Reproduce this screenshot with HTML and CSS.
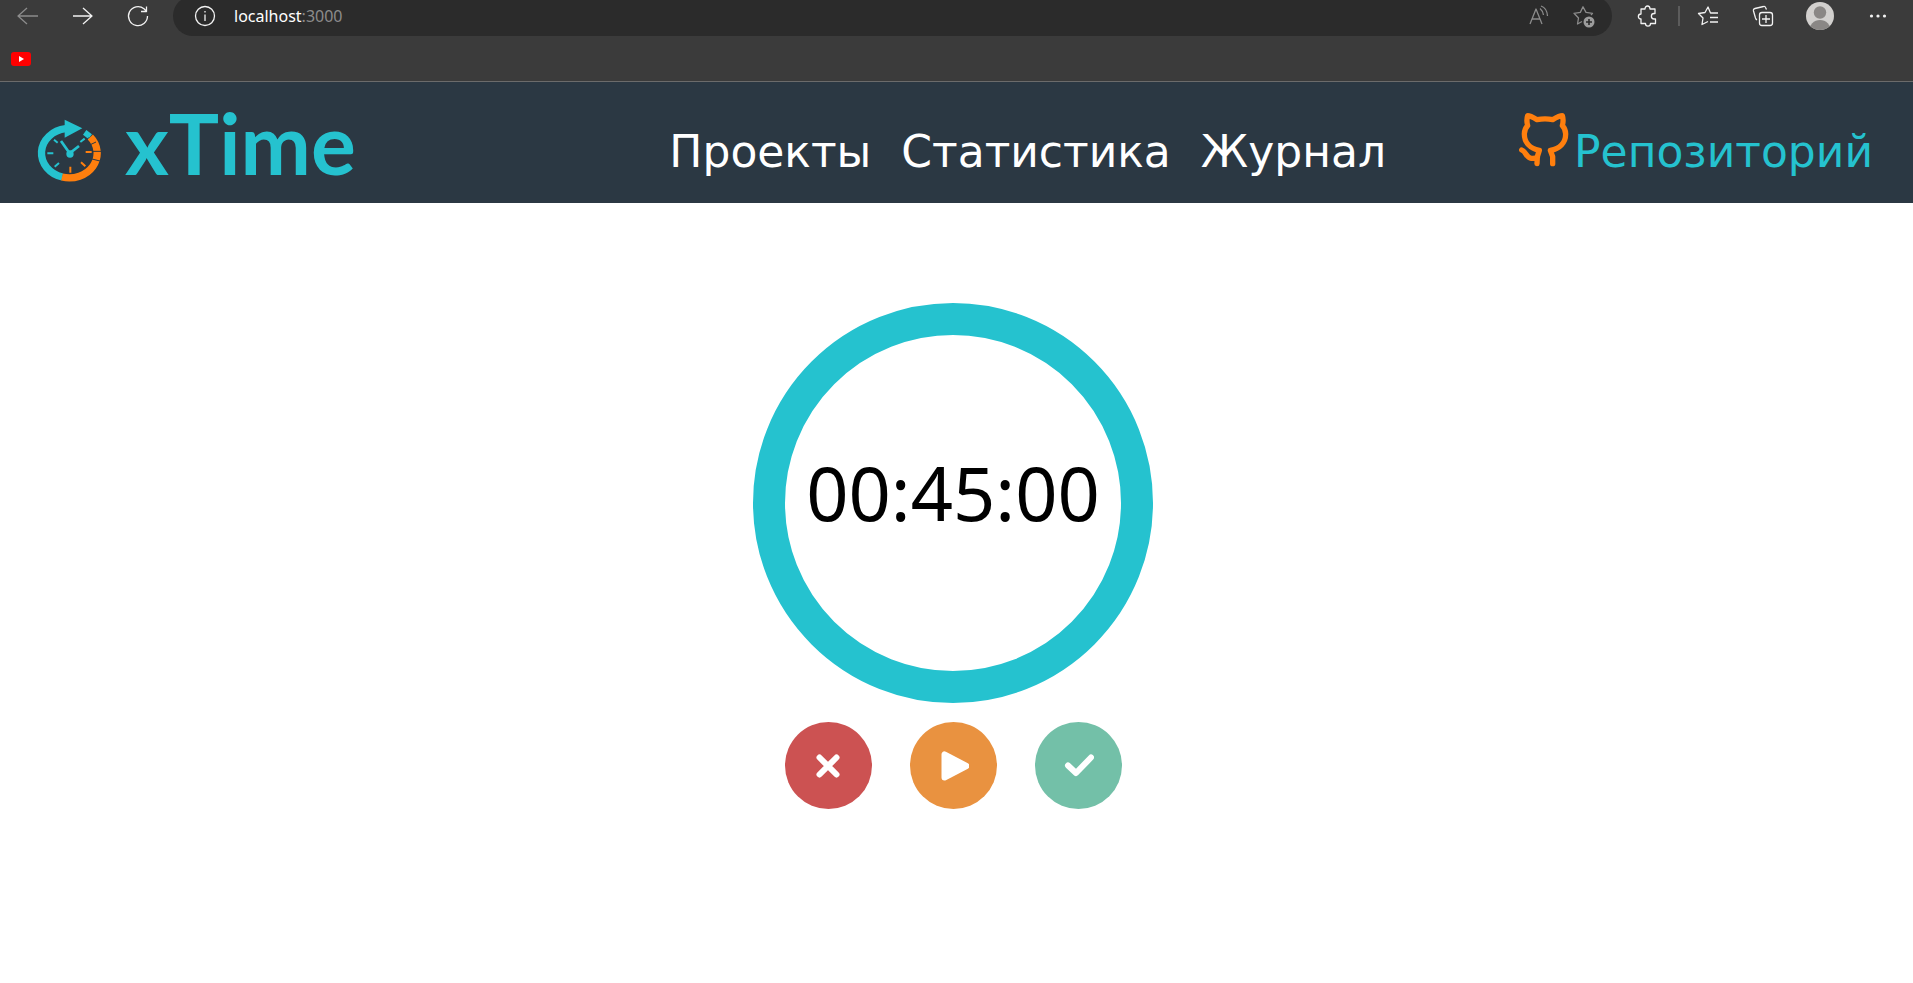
FILE: index.html
```html
<!DOCTYPE html>
<html lang="ru">
<head>
<meta charset="utf-8">
<title>xTime</title>
<link rel="stylesheet" href="styles.css">
</head>
<body>
<div class="browser">
  <div class="toolbar">
    <button class="tool tool-dim" aria-label="Back"><svg width="24" height="24" viewBox="0 0 24 24"><path d="M22 12H2M11 4L2 12L11 20"/></svg></button>
    <button class="tool" aria-label="Forward"><svg width="24" height="24" viewBox="0 0 24 24"><path d="M2 12H21M12 4L21 12L12 20"/></svg></button>
    <button class="tool" aria-label="Reload"><svg width="24" height="24" viewBox="0 0 24 24"><path d="M21.500 12A9.500 9.500 0 1 1 18 4.700L20.500 7.300M20.500 2.500V7.500H15"/></svg></button>
    <div class="address">
      <svg class="info" width="24" height="24" viewBox="0 0 24 24"><circle cx="12" cy="12" r="9.500"/><path d="M12 10.500V17M12 7V8.500"/></svg>
      <span class="url">localhost<span class="port">:3000</span></span>
      <button class="tool tool-small tool-dim" aria-label="Read aloud"><svg width="24" height="24" viewBox="0 0 24 24"><path d="M3 20L9 5L15 20M5 15H13M13 4.500Q16 7 16.500 11M14 2Q20 4 20.500 12"/></svg></button>
      <button class="tool tool-small tool-dim" aria-label="Add to favorites"><svg width="24" height="24" viewBox="0 0 24 24"><path d="M10 17.500L5.500 20L6.500 14L2 9.300L8.300 8.400L11 2.800L14 8.400L20.500 9.300L19 11"/><circle class="dot" cx="17" cy="18" r="5.500"/><path class="plus" d="M17 15V21M14 18H20"/></svg></button>
    </div>
    <button class="tool tool-wide" aria-label="Extensions"><svg width="24" height="24" viewBox="0 0 24 24"><path d="M5 5H9C9 1 14 1 14 5H19V9.500H18C14.500 9.500 14.500 15 18 15H19.500V19.500H14.500C14.500 23 9.500 23 9.500 19.500H5V15C1.500 15 1.500 10 5 10Z"/></svg></button>
    <span class="divider"></span>
    <button class="tool" aria-label="Favorites"><svg width="24" height="24" viewBox="0 0 24 24"><path d="M22 9H14.500L12 3L9 8.500L2.500 9.500L7 14L6 20.500L12 17.500M14 13.500H22M14 18H22"/></svg></button>
    <button class="tool" aria-label="Collections"><svg width="24" height="24" viewBox="0 0 24 24"><rect x="8.500" y="8.500" width="13" height="13" rx="2.500"/><path d="M15 11V19M11 15H19M15.500 5.500L14.500 3.500Q14 2 12.500 2.500L4 4.500Q2 5 2.500 7L4.500 14Q5 15.500 6 16"/></svg></button>
    <button class="tool tool-wide" aria-label="Profile"><svg width="28" height="28" viewBox="0 0 28 28"><defs><clipPath id="face"><circle cx="14" cy="14" r="14"/></clipPath></defs><g clip-path="url(#face)"><rect class="avatar-bg" width="28" height="28"/><circle class="avatar-fg" cx="14" cy="10.500" r="6.200"/><circle class="avatar-fg" cx="14" cy="29" r="11"/></g></svg></button>
    <button class="tool" aria-label="Menu"><svg width="24" height="24" viewBox="0 0 24 24"><g class="menu-dots"><circle cx="5.500" cy="12" r="1.600"/><circle cx="12" cy="12" r="1.600"/><circle cx="18.500" cy="12" r="1.600"/></g></svg></button>
  </div>
  <div class="bookmarks">
    <a href="#" aria-label="YouTube"><svg width="20" height="14" viewBox="0 0 20 14"><rect class="yt-box" width="20" height="14" rx="3"/><path class="yt-play" d="M8 4L13 7L8 10Z"/></svg></a>
  </div>
</div>

<header class="header">
  <a class="logo" href="#">
    <svg class="clock" width="64" height="64" viewBox="22 28 192 192">
      <g class="ring">
        <path class="teal" d="M98 202A83.500 74 0 0 1 108 57"/>
        <path class="orange" d="M97 202A83.500 74 0 0 0 182 82"/>
      </g>
      <path class="teal-fill" d="M105 30L158 56L105 84ZM170 61L187 74L176 88L160 75Z"/>
      <path class="gaps" d="M178 83L169 92M199 97L182 105M214 125L189 125M211 154L187 148"/>
      <path class="ticks teal" d="M73 90L84 99M53 131H71M75 171L88 160M152 97L165 87"/>
      <path class="ticks orange" d="M168 127H186M154 158L167 170M122 171V189"/>
      <path class="hands teal" d="M94 94L120 131L148 109"/>
      <circle class="teal-fill" cx="121" cy="133" r="11"/>
    </svg>
    <span class="brand">xTime</span>
  </a>
  <nav class="nav">
    <a href="#">Проекты</a>
    <a href="#">Статистика</a>
    <a href="#">Журнал</a>
  </nav>
  <a class="repo" href="#">
    <svg class="cat" width="52" height="56" viewBox="48 38 156 168">
      <path d="M105 193L106 172L112 153C85 148 67 130 67 104C67 95 70 86 77 79C74 68 74 58 77 49C85 49 95 55 105 61C120 58 138 58 152 61C162 55 172 49 181 49C184 58 184 68 181 79C188 86 191 95 191 104C191 130 173 148 145 153L152 172V193M59 152C72 156 72 175 88 177C96 178 101 177 106 174"/>
    </svg>
    <span>Репозиторий</span>
  </a>
</header>

<main class="main">
  <div class="dial"><time class="time">00:45:00</time></div>
  <div class="controls">
    <button class="control cancel" aria-label="Сбросить"><svg width="32" height="32" viewBox="0 0 32 32"><path d="M7.500 7.500L24.500 24.500M24.500 7.500L7.500 24.500"/></svg></button>
    <button class="control play" aria-label="Старт"><svg width="32" height="32" viewBox="0 0 32 32"><path class="solid" d="M7.500 4.500V27.500L29.500 16Z"/></svg></button>
    <button class="control done" aria-label="Готово"><svg width="32" height="32" viewBox="0 0 32 32"><path d="M6 15.500L14 23L29 7.500"/></svg></button>
  </div>
</main>
</body>
</html>
```
FILE: styles.css
```css
* { box-sizing: border-box; }

body {
  margin: 0;
  background: #fff;
  font-family: "Noto Sans", "Open Sans", sans-serif;
}

a { color: inherit; text-decoration: none; }
button { border: 0; padding: 0; background: none; }
svg { display: block; flex: none; }

.browser {
  height: 82px;
  overflow: hidden;
  background: #3b3b3b;
  border-bottom: 1px solid #6b6b6b;
}

.toolbar {
  display: flex;
  align-items: center;
  height: 40px;
  margin-top: -4px;
  padding-right: 8px;
}

.tool {
  display: flex;
  align-items: center;
  justify-content: center;
  flex: none;
  width: 55px;
  height: 40px;
  color: #f2f2f2;
}
.tool-dim { color: #8c8c8c; }
.tool-small { width: 45px; }
.tool-wide { width: 60px; }

.toolbar svg {
  fill: none;
  stroke: currentColor;
  stroke-width: 1.3;
  stroke-linejoin: round;
}
.toolbar .dot { fill: #9c9c9c; stroke: none; }
.toolbar .plus { stroke: #2b2b2b; stroke-width: 1.6; }
.toolbar .menu-dots { fill: #f2f2f2; stroke: none; }
.toolbar .avatar-bg { fill: #d2d0ce; stroke: none; }
.toolbar .avatar-fg { fill: #8a8785; stroke: none; }

.address {
  display: flex;
  align-items: center;
  flex: 1;
  height: 40px;
  margin: 0 6px 0 8px;
  padding: 0 6px 0 20px;
  border-radius: 20px;
  background: #2b2b2b;
  color: #f2f2f2;
}
.url {
  flex: 1;
  margin-left: 17px;
  font-size: 16px;
  line-height: 24px;
  color: #fff;
}
.port { color: #8c8c8c; }

.divider { width: 2px; height: 20px; background: #5c5c5c; }

.bookmarks { padding: 16px 11px; }
.yt-box { fill: #f00; }
.yt-play { fill: #fff; }

.header {
  display: flex;
  align-items: center;
  height: 121px;
  padding: 0 40px 0 37px;
  background: #2b3843;
  font-family: "DejaVu Sans", sans-serif;
  font-size: 44px;
  line-height: 56px;
  color: #fff;
}

.logo {
  display: flex;
  align-items: center;
  flex: 1;
  gap: 24px;
}
.clock { margin-top: 16px; }
.brand {
  font-family: Lato, sans-serif;
  font-size: 84px;
  font-weight: 700;
  font-kerning: none;
  line-height: 96px;
  color: #25c2cf;
}
.ring { fill: none; stroke-width: 22; }
.teal { fill: none; stroke: #25c2cf; }
.orange { fill: none; stroke: #ff7f0e; }
.teal-fill { fill: #25c2cf; }
.gaps { stroke: #2b3843; stroke-width: 3; }
.ticks { stroke-width: 6; }
.hands { stroke-width: 8; }

.nav {
  display: flex;
  gap: 30px;
  padding-top: 18px;
}

.repo {
  display: flex;
  align-items: center;
  gap: 4px;
  margin-left: 132px;
  padding-top: 18px;
  color: #25c2cf;
}
.cat {
  margin-bottom: 24px;
  fill: none;
  stroke: #ff7f0e;
  stroke-width: 16;
  stroke-linecap: round;
  stroke-linejoin: round;
}

.main {
  display: flex;
  flex-direction: column;
  align-items: center;
  gap: 19px;
  padding: 100px 7px 0 0;
}

.dial {
  display: flex;
  align-items: center;
  justify-content: center;
  width: 400px;
  height: 400px;
  padding-bottom: 20px;
  border: 32px solid #25c2cf;
  border-radius: 50%;
}
.time {
  font-size: 74px;
  line-height: 100px;
  color: #000;
}

.controls { display: flex; gap: 38px; }
.control {
  display: flex;
  align-items: center;
  justify-content: center;
  width: 87px;
  height: 87px;
  border-radius: 50%;
}
.control svg {
  fill: none;
  stroke: #fff;
  stroke-width: 6;
  stroke-linecap: round;
  stroke-linejoin: round;
}
.control .solid { fill: #fff; }
.cancel { background: #cc5252; }
.play { background: #e99240; }
.done { background: #73c0a8; }
```
